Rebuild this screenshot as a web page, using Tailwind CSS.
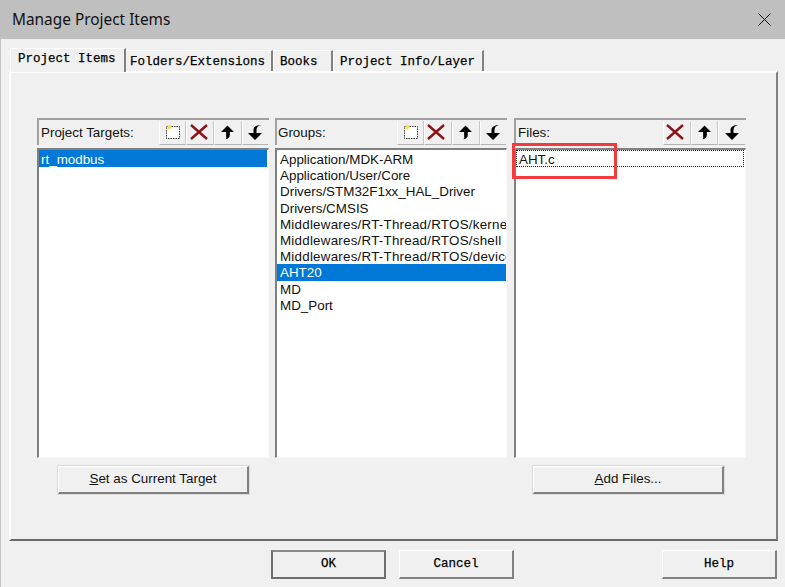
<!DOCTYPE html>
<html>
<head>
<meta charset="utf-8">
<script src="https://cdn.jsdelivr.net/npm/@tailwindcss/browser@4"></script>
</head>
<body class="m-0">
<div class="relative w-[785px] h-[587px] overflow-hidden bg-[#f0f0f0] font-['Liberation_Sans',sans-serif] text-[13.4px] text-[#111]">
  <!-- title bar -->
  <div class="h-[39px] bg-[#bfbfbf] flex items-center justify-between pl-[12px] pr-[14px]">
    <span class="font-['Noto_Sans',sans-serif] text-[15.4px] text-[#111]">Manage Project Items</span>
    <svg class="w-[13px] h-[13px]" viewBox="0 0 13 13"><path d="M.5 .5L12.5 12.5M12.5 .5L.5 12.5" stroke="#111" stroke-width="1" fill="none"/></svg>
  </div>
  <div class="absolute left-0 top-[39px] bottom-0 w-[1px] bg-[#c4c4c4]"></div>
  <!-- tabs -->
  <div class="ml-[9px] w-[769px] mt-[8px]">
    <div class="flex items-end h-[24px] pl-[1px] font-['Liberation_Mono',monospace] text-[12.5px] text-black [-webkit-text-stroke:0.25px_#000]">
      <div class="h-[24px] w-[116px] pl-[7px] pt-[1px] bg-[#f0f0f0] border-t border-l border-white border-r-2 border-r-[#808080] relative z-10 mb-[-1px]">Project Items</div>
      <div class="h-[21px] w-[147px] pl-[4px] pt-[2px] border-t border-white border-r-2 border-r-[#808080]">Folders/Extensions</div>
      <div class="h-[21px] w-[60px] pl-[6px] pt-[2px] border-t border-l border-white border-r-2 border-r-[#808080]">Books</div>
      <div class="h-[21px] w-[151px] pl-[6px] pt-[2px] border-t border-l border-white border-r-2 border-r-[#808080]">Project Info/Layer</div>
    </div>
    <!-- pane -->
    <div class="h-[470px] border-t-2 border-l-2 border-t-white border-l-white border-r-2 border-b-2 border-r-[#808080] border-b-[#696969] pt-[45px] pl-[26px]">
      <div class="flex">
        <!-- targets -->
        <div class="w-[232px] mr-[6px]">
          <div class="h-[27px] border-t-2 border-l-2 border-[#a0a0a0] flex items-center justify-between pl-[2px]">
            <span class="pt-[2px]">Project Targets:</span>
            <div class="flex h-[24px] pr-[1px]">
              <div class="w-[27px] h-[24px] border-r border-b border-r-[#c8c8c8] border-b-[#b4b4b4] border-l border-l-white flex items-center justify-center">
                <svg class="w-[18px] h-[18px]" viewBox="0 0 18 18"><rect x="2.5" y="3.5" width="13" height="12" fill="#fff" stroke="#333" stroke-width="1" stroke-dasharray="1.5 1"/><path d="M5 0.5l.8 2.2 2.2-.7-1.2 2 1.6 1.4-2.2.1-.9 2-.9-2-2.2-.1 1.6-1.4-1.2-2 2.2.7z" fill="#f2e34a"/></svg>
              </div>
              <div class="w-[28px] h-[24px] border-r border-b border-r-[#c8c8c8] border-b-[#b4b4b4] border-l border-l-white flex items-center justify-center">
                <svg class="w-[18px] h-[16px] mr-[3px]" viewBox="0 0 18 16"><path d="M1 1L17 15M17 1L1 15" stroke="#8a1414" stroke-width="2.4" fill="none"/></svg>
              </div>
              <div class="w-[28px] h-[24px] border-r border-b border-r-[#c8c8c8] border-b-[#b4b4b4] border-l border-l-white flex items-center justify-center">
                <svg class="w-[13px] h-[15px] mr-[1px]" viewBox="0 0 14 15"><path d="M7 0L14 7H9.5V10C9.5 12.5 8 14.5 5 15C6 13.5 5.5 12 5.5 10V7H0Z" fill="#000"/></svg>
              </div>
              <div class="w-[26px] h-[24px] border-b border-b-[#b4b4b4] border-l border-l-white flex items-center justify-center">
                <svg class="w-[14px] h-[15px] mr-[1px]" viewBox="0 0 14 15"><path d="M7 15L14 8H8.5V5C8.5 2.5 10 .5 13 0C9 0 5.5 1.5 5.5 5V8H0Z" fill="#000"/></svg>
              </div>
            </div>
          </div>
          <div class="h-[310px] mt-[3px] bg-white border-t-2 border-l-2 border-[#808080] border-r border-r-[#fafafa] border-b border-b-[#fafafa] overflow-hidden">
            <div class="bg-[#0078d7] text-white pl-[2px] pt-[2px] h-[17px] leading-[15px] mr-[1px]">rt_modbus</div>
          </div>
          <div class="mt-[8px] ml-[21px] w-[191px] h-[28px] bg-[#f0f0f0] border-t border-l border-white border-r-2 border-b-2 border-r-[#808080] border-b-[#808080] flex items-center justify-center outline outline-[#dcdcdc]"><span class="pb-[1px]"><span class="underline">S</span>et as Current Target</span></div>
        </div>
        <!-- groups -->
        <div class="w-[232px] mr-[7px]">
          <div class="h-[27px] border-t-2 border-l-2 border-[#a0a0a0] flex items-center justify-between pl-[1px]">
            <span class="pt-[2px]">Groups:</span>
            <div class="flex h-[24px] pr-[1px]">
              <div class="w-[27px] h-[24px] border-r border-b border-r-[#c8c8c8] border-b-[#b4b4b4] border-l border-l-white flex items-center justify-center">
                <svg class="w-[18px] h-[18px]" viewBox="0 0 18 18"><rect x="2.5" y="3.5" width="13" height="12" fill="#fff" stroke="#333" stroke-width="1" stroke-dasharray="1.5 1"/><path d="M5 0.5l.8 2.2 2.2-.7-1.2 2 1.6 1.4-2.2.1-.9 2-.9-2-2.2-.1 1.6-1.4-1.2-2 2.2.7z" fill="#f2e34a"/></svg>
              </div>
              <div class="w-[28px] h-[24px] border-r border-b border-r-[#c8c8c8] border-b-[#b4b4b4] border-l border-l-white flex items-center justify-center">
                <svg class="w-[18px] h-[16px] mr-[4px]" viewBox="0 0 18 16"><path d="M1 1L17 15M17 1L1 15" stroke="#8a1414" stroke-width="2.4" fill="none"/></svg>
              </div>
              <div class="w-[28px] h-[24px] border-r border-b border-r-[#c8c8c8] border-b-[#b4b4b4] border-l border-l-white flex items-center justify-center">
                <svg class="w-[13px] h-[15px] mr-[1px]" viewBox="0 0 14 15"><path d="M7 0L14 7H9.5V10C9.5 12.5 8 14.5 5 15C6 13.5 5.5 12 5.5 10V7H0Z" fill="#000"/></svg>
              </div>
              <div class="w-[26px] h-[24px] border-b border-b-[#b4b4b4] border-l border-l-white flex items-center justify-center">
                <svg class="w-[14px] h-[15px] mr-[1px]" viewBox="0 0 14 15"><path d="M7 15L14 8H8.5V5C8.5 2.5 10 .5 13 0C9 0 5.5 1.5 5.5 5V8H0Z" fill="#000"/></svg>
              </div>
            </div>
          </div>
          <div class="h-[310px] mt-[3px] bg-white border-t-2 border-l-2 border-[#808080] border-r border-r-[#fafafa] border-b border-b-[#fafafa] leading-[16.2px] overflow-hidden whitespace-nowrap pt-[1px]">
            <div class="pl-[3px] pt-[1px] h-[16.2px]">Application/MDK-ARM</div>
            <div class="pl-[3px] pt-[1px] h-[16.2px]">Application/User/Core</div>
            <div class="pl-[3px] pt-[1px] h-[16.2px]">Drivers/STM32F1xx_HAL_Driver</div>
            <div class="pl-[3px] pt-[1px] h-[16.2px]">Drivers/CMSIS</div>
            <div class="pl-[3px] pt-[1px] h-[16.2px] tracking-[0.22px]">Middlewares/RT-Thread/RTOS/kernel</div>
            <div class="pl-[3px] pt-[1px] h-[16.2px] tracking-[0.22px]">Middlewares/RT-Thread/RTOS/shell</div>
            <div class="pl-[3px] pt-[1px] h-[16.2px] tracking-[0.22px]">Middlewares/RT-Thread/RTOS/device</div>
            <div class="pl-[3px] pt-[1px] h-[16.2px] bg-[#0078d7] text-white">AHT20</div>
            <div class="pl-[3px] pt-[1px] h-[16.2px]">MD</div>
            <div class="pl-[3px] pt-[1px] h-[16.2px]">MD_Port</div>
          </div>
        </div>
        <!-- files -->
        <div class="w-[232px]">
          <div class="h-[27px] border-t-2 border-l-2 border-[#a0a0a0] flex items-center justify-between pl-[2px]">
            <span class="pt-[2px]">Files:</span>
            <div class="flex h-[24px] pr-[1px]">
              <div class="w-[28px] h-[24px] border-r border-b border-r-[#c8c8c8] border-b-[#b4b4b4] border-l border-l-white flex items-center justify-center">
                <svg class="w-[18px] h-[16px] mr-[4px]" viewBox="0 0 18 16"><path d="M1 1L17 15M17 1L1 15" stroke="#8a1414" stroke-width="2.4" fill="none"/></svg>
              </div>
              <div class="w-[27px] h-[24px] border-r border-b border-r-[#c8c8c8] border-b-[#b4b4b4] border-l border-l-white flex items-center justify-center">
                <svg class="w-[13px] h-[15px] mr-[1px]" viewBox="0 0 14 15"><path d="M7 0L14 7H9.5V10C9.5 12.5 8 14.5 5 15C6 13.5 5.5 12 5.5 10V7H0Z" fill="#000"/></svg>
              </div>
              <div class="w-[27px] h-[24px] border-b border-b-[#b4b4b4] border-l border-l-white flex items-center justify-center">
                <svg class="w-[14px] h-[15px] mr-[1px]" viewBox="0 0 14 15"><path d="M7 15L14 8H8.5V5C8.5 2.5 10 .5 13 0C9 0 5.5 1.5 5.5 5V8H0Z" fill="#000"/></svg>
              </div>
            </div>
          </div>
          <div class="h-[310px] mt-[3px] bg-white border-t-2 border-l-2 border-[#808080] border-r border-r-[#fafafa] border-b border-b-[#fafafa] leading-[16px] overflow-hidden">
            <div class="border border-dotted border-[#222] h-[17px] pl-[2px] pt-[1px] mr-[1px]">AHT.c</div>
          </div>
          <div class="mt-[8px] ml-[19px] w-[191px] h-[28px] bg-[#f0f0f0] border-t border-l border-white border-r-2 border-b-2 border-r-[#808080] border-b-[#808080] flex items-center justify-center outline outline-[#dcdcdc]"><span class="pb-[1px]"><span class="underline">A</span>dd Files...</span></div>
        </div>
      </div>
    </div>
    <!-- bottom buttons -->
    <div class="flex mt-[9px] font-['Liberation_Mono',monospace] text-[12.5px] text-black [-webkit-text-stroke:0.25px_#000]">
      <div class="ml-[262px] w-[115px] h-[29px] border-2 border-[#6e6e6e] border-t-[#8a8a8a] flex items-center justify-center">OK</div>
      <div class="ml-[13px] w-[115px] h-[29px] border-t border-l border-white border-r-2 border-b-2 border-r-[#808080] border-b-[#808080] flex items-center justify-center">Cancel</div>
      <div class="ml-[148px] w-[115px] h-[29px] border-t border-l border-white border-r-2 border-b-2 border-r-[#808080] border-b-[#808080] flex items-center justify-center">Help</div>
    </div>
  </div>
  <!-- red annotation rectangle -->
  <div class="absolute left-[512px] top-[143px] w-[105px] h-[36px] border-[3px] border-[#f23c3c] pointer-events-none"></div>
</div>
</body>
</html>
